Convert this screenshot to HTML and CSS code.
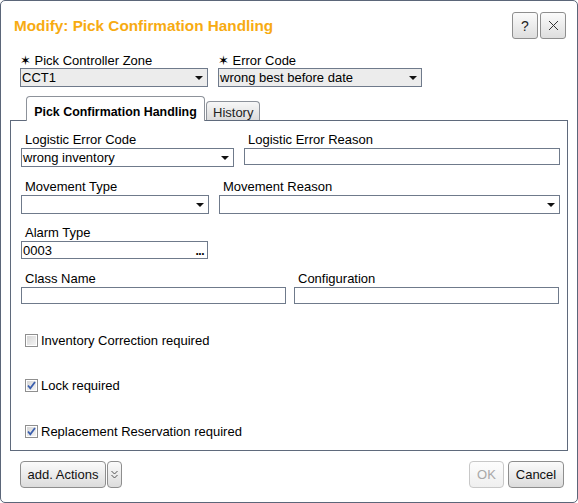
FILE: index.html
```html
<!DOCTYPE html>
<html>
<head>
<meta charset="utf-8">
<link rel="stylesheet" href="styles.css">
</head>
<body>
<div class="dialog">
  <div class="header">
    <div class="title">Modify: Pick Confirmation Handling</div>
    <div class="hbtns">
      <div class="hbtn">?</div>
      <div class="hbtn">
        <svg width="11" height="11" viewBox="0 0 11 11"><path d="M1 1 L10 10 M10 1 L1 10" stroke="#333" stroke-width="1" fill="none"/></svg>
      </div>
    </div>
  </div>

  <div class="toprow">
    <div class="field w188">
      <div class="tlabel"><span class="star">✶</span> Pick Controller Zone</div>
      <div class="sel grey"><span>CCT1</span><i class="caret"></i></div>
    </div>
    <div class="field w204">
      <div class="tlabel"><span class="star">✶</span> Error Code</div>
      <div class="sel grey"><span>wrong best before date</span><i class="caret"></i></div>
    </div>
  </div>

  <div class="tabs">
    <div class="tab active">Pick Confirmation Handling</div>
    <div class="tab">History</div>
  </div>

  <div class="panel">
    <div class="row rowA">
      <div class="field w213">
        <div class="label">Logistic Error Code</div>
        <div class="sel"><span>wrong inventory</span><i class="caret"></i></div>
      </div>
      <div class="field w316">
        <div class="label">Logistic Error Reason</div>
        <div class="inp"></div>
      </div>
    </div>
    <div class="row rowB">
      <div class="field w188">
        <div class="label">Movement Type</div>
        <div class="sel"><span></span><i class="caret"></i></div>
      </div>
      <div class="field w341">
        <div class="label">Movement Reason</div>
        <div class="sel"><span></span><i class="caret"></i></div>
      </div>
    </div>
    <div class="row rowC">
      <div class="field w187">
        <div class="label">Alarm Type</div>
        <div class="inp alarm"><span>0003</span><b class="dots">...</b></div>
      </div>
    </div>
    <div class="row rowD">
      <div class="field w265">
        <div class="label">Class Name</div>
        <div class="inp"></div>
      </div>
      <div class="field w265">
        <div class="label">Configuration</div>
        <div class="inp"></div>
      </div>
    </div>

    <div class="checks">
      <div class="check">
        <svg class="cb" width="13" height="13" viewBox="0 0 13 13">
          <defs><linearGradient id="g1" x1="0" y1="0" x2="1" y2="1"><stop offset="0" stop-color="#d6d6d6"/><stop offset="1" stop-color="#f4f4f4"/></linearGradient></defs>
          <rect x="0.5" y="0.5" width="12" height="12" fill="#fff" stroke="#8f8f8f"/>
          <rect x="2" y="2" width="9" height="9" fill="url(#g1)"/>
        </svg>
        <span>Inventory Correction required</span>
      </div>
      <div class="check">
        <svg class="cb" width="13" height="13" viewBox="0 0 13 13">
          <rect x="0.5" y="0.5" width="12" height="12" fill="#fff" stroke="#8f8f8f"/>
          <rect x="2" y="2" width="9" height="9" fill="url(#g1)"/>
          <path d="M3 6.5 L5.3 9.3 L10 3" stroke="#3b5fae" stroke-width="1.8" fill="none"/>
        </svg>
        <span>Lock required</span>
      </div>
      <div class="check">
        <svg class="cb" width="13" height="13" viewBox="0 0 13 13">
          <rect x="0.5" y="0.5" width="12" height="12" fill="#fff" stroke="#8f8f8f"/>
          <rect x="2" y="2" width="9" height="9" fill="url(#g1)"/>
          <path d="M3 6.5 L5.3 9.3 L10 3" stroke="#3b5fae" stroke-width="1.8" fill="none"/>
        </svg>
        <span>Replacement Reservation required</span>
      </div>
    </div>
  </div>

  <div class="footer">
    <div class="left">
      <div class="btn add">add. Actions</div>
      <div class="btn more">
        <svg width="7" height="10" viewBox="0 0 7 10"><path d="M0.5 1 L3.5 4 L6.5 1 M0.5 5 L3.5 8 L6.5 5" stroke="#555" stroke-width="1" fill="none"/></svg>
      </div>
    </div>
    <div class="right">
      <div class="btn ok">OK</div>
      <div class="btn cancel">Cancel</div>
    </div>
  </div>
</div>
</body>
</html>
```

FILE: styles.css
```css
html, body {
  margin: 0;
  padding: 0;
  background: #fff;
}
body {
  font-family: "Liberation Sans", Arial, sans-serif;
  font-size: 13px;
  color: #000;
}
.dialog {
  box-sizing: border-box;
  width: 578px;
  height: 503px;
  border: 1px solid #5b6679;
  border-radius: 5px;
  background: #fff;
  display: flex;
  flex-direction: column;
}
.header {
  display: flex;
  align-items: center;
  justify-content: space-between;
  padding: 11px 11px 0 13px;
  height: 27px;
}
.title {
  color: #f7ab12;
  font-weight: bold;
  font-size: 15.3px;
  line-height: 18px;
  padding-top: 1px;
}
.hbtns {
  display: flex;
  gap: 2px;
}
.hbtn {
  box-sizing: border-box;
  width: 26px;
  height: 27px;
  border: 1px solid #8e8e8e;
  border-radius: 3px;
  background: linear-gradient(#fbfbfb, #dedede);
  display: flex;
  align-items: center;
  justify-content: center;
  font-size: 14px;
  color: #222;
}
.toprow {
  display: flex;
  gap: 10px;
  margin: 14px 0 0 19px;
}
.field {
  display: flex;
  flex-direction: column;
}
.w187 { width: 187px; }
.w188 { width: 188px; }
.w204 { width: 204px; }
.w213 { width: 213px; }
.w265 { width: 265px; }
.w316 { width: 316px; }
.w341 { width: 341px; }
.tlabel {
  line-height: 15px;
  height: 15px;
  white-space: nowrap;
}
.star {
  font-family: "DejaVu Sans", sans-serif;
  font-size: 13px;
  line-height: 13px;
}
.label {
  line-height: 15px;
  height: 15px;
  padding-left: 4px;
  margin-bottom: 1px;
  white-space: nowrap;
}
.sel {
  box-sizing: border-box;
  height: 19px;
  border: 1px solid #6f7a8b;
  background: #fff;
  display: flex;
  align-items: center;
  justify-content: space-between;
  padding: 0 4px 0 1px;
  line-height: 17px;
}
.sel.grey {
  background: #ececec;
}
.caret {
  width: 0;
  height: 0;
  border-left: 4px solid transparent;
  border-right: 4px solid transparent;
  border-top: 4px solid #111;
}
.inp {
  box-sizing: border-box;
  height: 17px;
  border: 1px solid #6f7a8b;
  background: #fff;
  line-height: 15px;
  padding: 0 1px;
}
.inp.alarm {
  height: 18px;
  display: flex;
  justify-content: space-between;
  align-items: center;
  padding-right: 3px;
}
.dots {
  font-size: 12px;
  line-height: 10px;
  letter-spacing: -0.5px;
  align-self: flex-end;
  padding-bottom: 2px;
}
.tabs {
  position: relative;
  z-index: 1;
  display: flex;
  align-items: flex-end;
  margin: 9px 0 -1px 25px;
  height: 25px;
}
.tab {
  box-sizing: border-box;
  border: 1px solid #8d929a;
  border-bottom: none;
  border-radius: 4px 4px 0 0;
  line-height: 18px;
  white-space: nowrap;
}
.tab.active {
  height: 25px;
  width: 179px;
  padding: 6px 0 0 0;
  text-align: center;
  background: #fff;
  font-weight: bold;
  font-size: 12.4px;
}
.tab:not(.active) {
  height: 19px;
  margin-bottom: 1px;
  margin-left: 1px;
  padding: 2px 6px 0 6px;
  background: linear-gradient(#f7f7f7, #dcdcdc);
  color: #222;
}
.panel {
  box-sizing: border-box;
  height: 331px;
  margin: 0 9px;
  border: 1px solid #5f6a7c;
  padding: 10px 0 0 10px;
}
.row {
  display: flex;
  gap: 10px;
}
.rowA { margin-top: 1px; }
.rowB { margin-top: 12px; }
.rowC { margin-top: 11px; }
.rowD { margin-top: 12px; gap: 8px; }
.checks {
  display: flex;
  flex-direction: column;
  gap: 29px;
  margin-top: 28px;
  padding-left: 4px;
}
.check {
  display: flex;
  align-items: center;
  height: 16px;
  gap: 3px;
}
.check + .check + .check {
  margin-top: 1px;
}
.cb {
  flex: none;
}
.footer {
  display: flex;
  justify-content: space-between;
  padding: 10px 13px 0 19px;
}
.left, .right {
  display: flex;
  gap: 1px;
}
.right {
  gap: 4px;
}
.btn {
  box-sizing: border-box;
  height: 27px;
  border: 1px solid #8e8e8e;
  border-radius: 4px;
  background: linear-gradient(#fbfbfb, #dcdcdc);
  display: flex;
  align-items: center;
  justify-content: center;
  color: #111;
}
.add {
  width: 86px;
}
.more {
  width: 15px;
}
.ok {
  width: 35px;
  color: #a8a8a8;
  border-color: #c8c8c8;
  background: linear-gradient(#fdfdfd, #efefef);
}
.cancel {
  width: 56px;
}
```
